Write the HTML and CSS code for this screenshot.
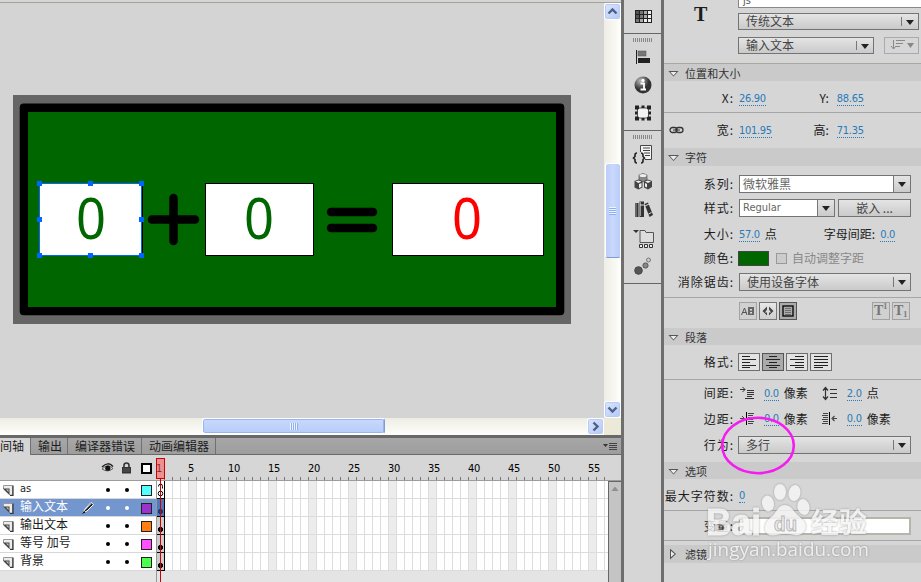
FILE: index.html
```html
<!DOCTYPE html>
<html lang="zh-CN">
<head>
    <meta charset="UTF-8">
    <title>Flash</title>
    <link rel="stylesheet" href="styles.css">
</head>
<body>
<div class="app">
    <div class="main">
        <div class="workspace">
            <svg class="stage" width="604" height="415" viewBox="0 3 604 415">
                <rect x="13" y="95" width="558" height="229" fill="#666"/>
                <rect x="19.7" y="103.5" width="544.6" height="211.8" rx="4" fill="#000"/>
                <rect x="28" y="112" width="528" height="195" fill="#060"/>
                <g fill="#fff" stroke="#000">
                    <rect x="39.5" y="183.5" width="103" height="72"/>
                    <rect x="205.5" y="183.5" width="108" height="72"/>
                    <rect x="392.5" y="183.5" width="151" height="72"/>
                </g>
                <g stroke="#000" stroke-width="8.5" stroke-linecap="round">
                    <path d="M152 219.5h43M173.5 198v43"/>
                    <path d="M331 212h42M331 228h42"/>
                </g>
                <g class="num">
                    <text x="76" y="238.5" fill="#060" textLength="30" lengthAdjust="spacingAndGlyphs">0</text>
                    <text x="244" y="238.5" fill="#060" textLength="30" lengthAdjust="spacingAndGlyphs">0</text>
                    <text x="452" y="238.5" fill="#f00" textLength="30" lengthAdjust="spacingAndGlyphs">0</text>
                </g>
                <rect x="39.5" y="183.5" width="102" height="72" fill="none" stroke="#06f"/>
                <path fill="#06f" d="M37 181h5v5h-5zM88 181h5v5h-5zM139 181h5v5h-5zM37 217h5v5h-5zM139 217h5v5h-5zM37 253h5v5h-5zM88 253h5v5h-5zM139 253h5v5h-5z"/>
            </svg>
            <div class="vscroll">
                <div class="sbtn"><svg width="15" height="15"><path d="M3.5 9.5l4-4 4 4"/></svg></div>
                <div class="vthumb"></div>
                <div class="sbtn"><svg width="15" height="15"><path d="M3.5 5.5l4 4 4-4"/></svg></div>
            </div>
        </div>
        <div class="hscroll">
            <div class="hthumb"></div>
            <div class="sbtn"><svg width="15" height="15"><path d="M5.5 3.5l4 4-4 4"/></svg></div>
            <div class="corner"></div>
        </div>

        <div class="tabs">
            <div class="tab active">间轴</div>
            <div class="tab">输出</div>
            <div class="tab">编译器错误</div>
            <div class="tab">动画编辑器</div>
            <svg class="menu" width="15" height="9"><path d="M0 2h5l-2.500 3z" fill="#333"/><path d="M6 1.500h8M6 3.500h8M6 5.500h8M6 7.500h8" stroke="#444"/></svg>
        </div>

        <div class="timeline">
            <div class="tl-head">
                <div class="tl-icons">
                    <svg width="56" height="16">
                        <path d="M2 7Q8 1 13 6.500" fill="none" stroke="#222" stroke-width="1.500"/>
                        <path d="M2 9Q8 3 13 8.500Q8 13 2 9z" fill="#ddd" stroke="#444" stroke-width=".8"/>
                        <circle cx="7.800" cy="8.200" r="2.600" fill="#111"/>
                        <path d="M24 8V5.500a2.500 2.500 0 0 1 5 0V8" fill="none" stroke="#333" stroke-width="1.600"/>
                        <rect x="22" y="7" width="9" height="6.500" fill="#333"/>
                        <path d="M23 9h7M23 11h7" stroke="#777" stroke-width=".6"/>
                        <rect x="42" y="4" width="9" height="9" fill="#fff" stroke="#000" stroke-width="2"/>
                    </svg>
                </div>
                <div class="ruler">
                    <span class="first">1</span><span>5</span><span>10</span><span>15</span><span>20</span><span>25</span><span>30</span><span>35</span><span>40</span><span>45</span><span>50</span><span>55</span>
                </div>
            </div>
            <div class="tl-body">
                <div class="layers">
                    <div class="layer">
                        <svg class="page" width="12" height="12"><use href="#page"/></svg>
                        <span class="name latin">as</span><i class="dot"></i><i class="dot"></i><b class="swatch cyan"></b>
                    </div>
                    <div class="layer selected">
                        <svg class="page" width="12" height="12"><use href="#page"/></svg>
                        <span class="name">输入文本</span>
                        <svg class="pencil" width="15" height="14"><path d="M2 12l2-4 6-6.500 2.500 2L6 10z" fill="#222" stroke="#fff"/><path d="M4 9l6-6" stroke="#999"/><path d="M1 13l2-3 1.500 1.500z" fill="#000"/></svg>
                        <i class="dot"></i><i class="dot"></i><b class="swatch purple"></b>
                    </div>
                    <div class="layer">
                        <svg class="page" width="12" height="12"><use href="#page"/></svg>
                        <span class="name">输出文本</span><i class="dot"></i><i class="dot"></i><b class="swatch orange"></b>
                    </div>
                    <div class="layer">
                        <svg class="page" width="12" height="12"><use href="#page"/></svg>
                        <span class="name">等号 加号</span><i class="dot"></i><i class="dot"></i><b class="swatch pink"></b>
                    </div>
                    <div class="layer">
                        <svg class="page" width="12" height="12"><use href="#page"/></svg>
                        <span class="name">背景</span><i class="dot"></i><i class="dot"></i><b class="swatch green"></b>
                    </div>
                </div>
                <div class="frames">
                    <div class="track"><div class="key script"><svg width="7" height="17"><path d="M1.500 5.500q0-2.500 2-2.500t2 2.500v2" fill="none" stroke="#000"/><circle cx="3.500" cy="12.500" r="2.300" fill="#fff" stroke="#000"/></svg></div></div>
                    <div class="track"><div class="key on"></div></div>
                    <div class="track"><div class="key"></div></div>
                    <div class="track"><div class="key"></div></div>
                    <div class="track"><div class="key"></div></div>
                </div>
                <div class="tl-scroll"><svg width="12" height="14"><path d="M2.500 9h7L6 4.500z" fill="#909090"/></svg></div>
            </div>
            <div class="playhead"></div>
        </div>
    </div>

    <div class="dock">
        <div class="group one">
            <div class="tool"><svg width="24" height="24"><rect x="4" y="5" width="17" height="13" fill="#222"/><path fill="#555" d="M5 6h3v3H5zM5 10h3v3H5z"/><path fill="#777" d="M9 6h3v3H9zM5 14h3v3H5zM9 10h3v3H9z"/><path fill="#aaa" d="M13 6h3v3h-3zM9 14h3v3H9zM13 10h3v3h-3z"/><path fill="#eee" d="M17 6h3v3h-3zM17 10h3v3h-3zM13 14h3v3h-3zM17 14h3v3h-3z"/></svg></div>
        </div>
        <div class="group">
            <div class="grip"></div>
            <div class="tool"><svg width="24" height="24"><path d="M5.500 5v14" stroke="#222"/><rect x="7" y="6" width="8" height="5" fill="#777" stroke="#555" stroke-width=".5"/><rect x="7" y="13" width="12" height="5" fill="#222"/></svg></div>
            <div class="tool"><svg width="24" height="24"><defs><radialGradient id="ball" cx=".35" cy=".25"><stop offset="0" stop-color="#bbb"/><stop offset="1" stop-color="#333"/></radialGradient></defs><circle cx="12" cy="12" r="8.500" fill="url(#ball)"/><circle cx="12" cy="7.500" r="1.700" fill="#fff"/><path d="M9.500 10.500h3.500V16M9.500 16.500h5.500" stroke="#fff" stroke-width="1.800" fill="none"/></svg></div>
            <div class="tool"><svg width="24" height="24"><rect x="6.500" y="7" width="11" height="10" fill="#eee" stroke="#555"/><path fill="#222" d="M4 4.500h4v4H4zM10.500 4.500h3v2.500h-3zM16 4.500h4v4h-4zM4 10.500h2.500v3H4zM17.500 10.500H20v3h-2.500zM4 15.500h4v4H4zM10.500 17h3v2.500h-3zM16 15.500h4v4h-4z"/><rect x="7.500" y="8" width="9" height="8" fill="#f2f2f2"/></svg></div>
        </div>
        <div class="group">
            <div class="grip"></div>
            <div class="tool"><svg width="24" height="24"><path d="M9.500 10V3.500h11v14H14" fill="#f4f4f4" stroke="#444"/><path d="M12 6h7M12 8.500h7M13 11h6M14 13.500h5" stroke="#444"/><path d="M6 11q-2 0-2 2v1.500L2.500 16 4 17.500V19q0 2 2 2M10 11q2 0 2 2v1.500l1.500 1.500-1.500 1.500V19q0 2-2 2" fill="none" stroke="#222" stroke-width="1.600"/></svg></div>
            <div class="tool"><svg width="24" height="24"><path d="M8 5l4-1.500L16 5v5l-4 2-4-2z" fill="#888" stroke="#555" stroke-width=".7"/><ellipse cx="12" cy="5.500" rx="3.500" ry="1.600" fill="#eee"/><path d="M3.500 11l4-1.500 4 1.500v6.500l-4 2-4-2zM13 11l4-1.500 4 1.500v6l-4 2.500-4-2z" fill="#444"/><path d="M4.500 11.500l3-1 3 1-3 1.500zM14 11.500l3-1 3 1-3 1.500zM8 14l2.500-1v4L8 18zM14 13l2 1v3.500l-2-1z" fill="#eee"/></svg></div>
            <div class="tool"><svg width="24" height="24"><path d="M4 5h3.500v14H4zM8.500 3.500H13V19H8.500z" fill="#333"/><path d="M13.500 6l3.500-1.500 5 12.500-3.500 2z" fill="#333"/><path d="M5 5v14M9.500 4v14" stroke="#999"/><path d="M9 7h4M14 8l4-2M17.500 16l3-1.500" stroke="#ddd"/></svg></div>
            <div class="tool"><svg width="24" height="24"><path d="M2 3h6L5 6z" fill="#333"/><path d="M9 6V3.500h5l1 2h7.500v10H9z" fill="#ddd" stroke="#555"/><path d="M8.500 17.500h3v3h-3zM13.500 17.500h3v3h-3zM18.500 17.500h3v3h-3z" fill="#eee" stroke="#333"/></svg></div>
            <div class="tool"><svg width="24" height="24"><circle cx="7.500" cy="15.500" r="3.800" fill="#555" stroke="#444"/><circle cx="14.500" cy="10.500" r="2.600" fill="#888" stroke="#555"/><circle cx="17.500" cy="5" r="2" fill="#ccc" stroke="#777"/></svg></div>
        </div>
    </div>

    <div class="props">
        <div class="top">
            <div class="big-t">T</div>
            <div class="top-fields">
                <div class="field js">js</div>
                <div class="select w181">传统文本<u></u></div>
                <div class="pair">
                    <div class="select w136">输入文本<u></u></div>
                    <div class="dir"><svg width="28" height="12"><path d="M5.500 1v9M3 7l2.500 3L8 7M8 1.500h9M8 4.500h7M8 7.500h4" fill="none" stroke="#888"/><path d="M19 4h7l-3.500 5z" fill="#888"/></svg></div>
                </div>
            </div>
        </div>

        <div class="head"><i class="tri"></i>位置和大小</div>
        <div class="row xy line"><span class="label">X:</span><a>26.90</a><span class="label2">Y:</span><a>88.65</a></div>
        <div class="row wh">
            <svg class="chain" width="16" height="8"><rect x="1" y="1.500" width="7" height="5" rx="2.500" fill="none" stroke="#333" stroke-width="1.300"/><rect x="7" y="1.500" width="7" height="5" rx="2.500" fill="none" stroke="#333" stroke-width="1.300"/><path d="M4 4h7" stroke="#333"/></svg>
            <span class="label">宽:</span><a>101.95</a><span class="label2">高:</span><a>71.35</a>
        </div>

        <div class="head char"><i class="tri"></i>字符</div>
        <div class="row family"><span class="label">系列:</span><div class="combo w172">微软雅黑<u></u></div></div>
        <div class="row style"><span class="label">样式:</span><div class="combo w97 latin">Regular<u></u></div><div class="button">嵌入 ...</div></div>
        <div class="row size"><span class="label">大小:</span><a>57.0</a><span class="unit">点</span><span class="label3">字母间距:</span><a>0.0</a></div>
        <div class="row color"><span class="label">颜色:</span><div class="fill"></div><div class="check"></div><span class="muted">自动调整字距</span></div>
        <div class="row alias line"><span class="label">消除锯齿:</span><div class="select w172">使用设备字体<u></u></div></div>
        <div class="row marks">
            <div class="mini dim"><svg width="16" height="16"><path d="M1.500 12l3-7 2.500 7M2.500 9.500h4" fill="none" stroke="#555"/><path d="M8 4h6v8H8z" fill="#666"/><path d="M10 6h2v1.500h-2zM10 9h2v1.500h-2z" fill="#ddd"/></svg></div>
            <div class="mini"><svg width="16" height="16"><path d="M7 3.500v9L2.500 8zM9 3.500v9L13.500 8z" fill="#444"/><path d="M7 6.500v3H5zM9 6.500v3h2z" fill="#ddd"/></svg></div>
            <div class="mini pressed"><svg width="16" height="16"><rect x="3" y="3" width="10" height="10" fill="none" stroke="#000" stroke-width="1.300"/><path d="M5 5.500h6M5 7.500h6M5 9.500h6M5 11.500h6" stroke="#444" stroke-width=".6"/></svg></div>
            <div class="mini dim push">T<sup>1</sup></div>
            <div class="mini dim">T<sub>1</sub></div>
        </div>

        <div class="head"><i class="tri"></i>段落</div>
        <div class="row format line"><span class="label">格式:</span>
            <div class="align"><svg width="20" height="16"><path d="M3 2.500h8M3 5.500h14M3 8.500h8M3 11.500h14M3 13.500h8"/></svg></div>
            <div class="align pressed"><svg width="20" height="16"><path d="M6 2.500h8M3 5.500h14M6 8.500h8M3 11.500h14M6 13.500h8"/></svg></div>
            <div class="align"><svg width="20" height="16"><path d="M8 2.500h9M3 5.500h14M8 8.500h9M3 11.500h14M8 13.500h9"/></svg></div>
            <div class="align"><svg width="20" height="16"><path d="M3 2.500h14M3 5.500h14M3 8.500h14M3 11.500h14M3 13.500h9"/></svg></div>
        </div>
        <div class="row spacing"><span class="label">间距:</span>
            <svg class="ic" width="17" height="15"><path d="M1 3.500h5M3.500 1L6 3.500 3.500 6M8 4.500h7M8 6.500h7M8 8.500h7M8 10.500h5M6 12.500h9" fill="none" stroke="#333"/></svg>
            <a>0.0</a><span class="unit">像素</span>
            <svg class="ic2" width="17" height="15"><path d="M3.500 2v11M1 4.500l2.500-3 2.500 3M1 10.500l2.500 3 2.500-3M8 3.500h7M8 7.500h7M8 11.500h7" fill="none" stroke="#333" stroke-width="1.200"/></svg>
            <a>2.0</a><span class="unit">点</span>
        </div>
        <div class="row margin"><span class="label">边距:</span>
            <svg class="ic" width="17" height="15"><path d="M1 7.500h4M3 5l2.500 2.500L3 10M9 2.500h6M9 4.500h5M9 6.500h6M9 8.500h5M9 10.500h6M9 12.500h5" fill="none" stroke="#444"/><path d="M7.500 1v13" stroke="#000"/></svg>
            <a>0.0</a><span class="unit">像素</span>
            <svg class="ic2" width="17" height="15"><path d="M1 2.500h5M0 4.500h6M1 6.500h5M0 8.500h6M1 10.500h5M0 12.500h6M11 7.500h4M12.500 5L10 7.500l2.500 2.500" fill="none" stroke="#444" stroke-width="1.200"/><path d="M7.500 1v13" stroke="#000"/></svg>
            <a>0.0</a><span class="unit">像素</span>
        </div>
        <div class="row behave"><span class="label">行为:</span><div class="select w173">多行<u></u></div></div>

        <div class="head"><i class="tri"></i>选项</div>
        <div class="row max line"><span class="label">最大字符数:</span><a>0</a></div>
        <div class="row var line"><span class="label">变量:</span><div class="input"></div></div>
        <div class="head filters"><i class="tri closed"></i>滤镜</div>
    </div>
</div>

<!-- watermark and hand-drawn ring over the panel -->
<svg class="overlay" width="221" height="182" viewBox="700 400 221 182">
    <g class="wm">
        <text x="706" y="534.500" class="wm-big" textLength="55" lengthAdjust="spacingAndGlyphs">Bai</text>
        <ellipse cx="768" cy="503.500" rx="6" ry="8" transform="rotate(-12 768 503.500)"/>
        <ellipse cx="780" cy="492" rx="6" ry="8"/>
        <ellipse cx="794.500" cy="493" rx="6" ry="8" transform="rotate(10 794.500 493)"/>
        <ellipse cx="803.500" cy="507" rx="6" ry="8" transform="rotate(-14 803.500 507)"/>
        <path d="M785 505q5 0 9 6 3 4 7 7 7 6 4 12-3 6-10 5-10-2-19 0-9 2-11-5-1-7 5-12 4-3 7-8 3-5 8-5z"/>
        <text x="811" y="533" class="wm-cn" textLength="56" lengthAdjust="spacingAndGlyphs">经验</text>
        <text x="708" y="556" class="wm-url" textLength="161" lengthAdjust="spacingAndGlyphs">jingyan.baidu.com</text>
    </g>
    <text x="774" y="531" class="wm-du" textLength="23" lengthAdjust="spacingAndGlyphs">du</text>
    <ellipse cx="758" cy="445.500" rx="35.800" ry="27.700" fill="none" stroke="#f41cf0" stroke-width="2.600"/>
</svg>

<svg width="0" height="0" class="defs"><defs><g id="page"><path d="M1.500 1.500h9v9.500H8L1.500 5z" fill="#ececec" stroke="#999"/><path d="M11 1.500V11.500H8" fill="none" stroke="#333" stroke-width="1.200"/><path d="M1 4.500h6.500V11z" fill="#444"/><path d="M4 5.500h2.500v2.500z" fill="#ccc"/></g></defs></svg>
</body>
</html>
```

FILE: styles.css
```css
* {
    box-sizing: border-box;
}

body {
    margin: 0;
    width: 921px;
    height: 582px;
    overflow: hidden;
    background: #d6d6d6;
    color: #1c1c1c;
    font-family: "Noto Sans CJK SC", sans-serif;
    font-size: 12px;
    line-height: 16px;
}

svg {
    display: block;
    flex: none;
}

.defs {
    position: absolute;
}

.app {
    display: flex;
    height: 582px;
}

.latin, .ruler, a {
    font-family: "DejaVu Sans Condensed", "Noto Sans", sans-serif;
    font-size: 11px;
}

/* ---- left side ---- */
.main {
    width: 624px;
    flex: none;
    border-right: 3px solid #6e6e6e;
    display: flex;
    flex-direction: column;
}

.workspace {
    display: flex;
    height: 416px;
    margin-top: 2px;
    border-top: 1px solid #a5a29a;
    background: #d4d4d4;
}

.num {
    font-family: "Noto Sans", sans-serif;
    font-size: 57px;
}

.vscroll {
    width: 17px;
    background: linear-gradient(90deg, #eeede5, #fefefb);
    display: flex;
    flex-direction: column;
    align-items: center;
}

.sbtn {
    width: 17px;
    height: 17px;
    flex: none;
    border: 1px solid #fff;
    border-radius: 3px;
    background: linear-gradient(135deg, #dbe5fe, #b4c8f6);
    box-shadow: inset 0 0 0 1px #b8cbf6;
}

.sbtn path {
    fill: none;
    stroke: #4d6185;
    stroke-width: 2.4;
}

.vthumb {
    width: 16px;
    height: 95px;
    margin-top: 143px;
    margin-bottom: 143px;
    border: 1px solid #fff;
    border-bottom-color: #7d9cd8;
    border-radius: 3px;
    background:
        repeating-linear-gradient(#eef4fe 0 1px, #8cb0f8 1px 2px) center / 7px 8px no-repeat,
        linear-gradient(90deg, #bccdf8, #cad8fd 50%, #b6cdf8);
}

.hscroll {
    display: flex;
    height: 17px;
    background: linear-gradient(#eeede5, #fefefb);
}

.hthumb {
    width: 183px;
    height: 16px;
    margin-left: 202px;
    margin-right: 202px;
    border: 1px solid #fff;
    border-right-color: #7d9cd8;
    border-radius: 3px;
    box-shadow: inset 0 0 0 1px #9ab5ee;
    background:
        repeating-linear-gradient(90deg, #eef4fe 0 1px, #8cb0f8 1px 2px) center / 8px 7px no-repeat,
        linear-gradient(#cad8fd, #b6cdf8);
}

.corner {
    width: 17px;
    background: #ece9d8;
}

.tabs {
    display: flex;
    height: 20px;
    border-top: 3px solid #686868;
    border-bottom: 1px solid #6a6a6a;
    background: linear-gradient(#a7a7a7, #9d9d9d);
    white-space: nowrap;
}

.tab {
    padding: 0 6px 0 7px;
    width: 37px;
    border-right: 1px solid #707070;
    line-height: 15px;
}

.tab:nth-child(n+3) {
    width: 74px;
}

.tab.active {
    width: 31px;
    height: 17px;
    padding: 0;
    background: #d6d6d6;
}

.menu {
    margin: 4px 3px 0 auto;
}

/* ---- timeline ---- */
.timeline {
    position: relative;
    flex: 1;
    background: #e4e4e4;
}

.tl-head {
    display: flex;
    height: 26px;
    background: #d6d6d6;
    border-bottom: 1px solid #9c9c9c;
}

.tl-icons {
    width: 156px;
    padding: 5px 0 0 100px;
}

.ruler {
    display: flex;
    flex: 1;
    overflow: hidden;
    color: #000;
    line-height: 27px;
    letter-spacing: -.3px;
    background: repeating-linear-gradient(90deg, transparent 0 7px, #777 7px 8px) 1px 100% / 452px 3px no-repeat;
}

.ruler span {
    flex: none;
    width: 40px;
}

.ruler .first {
    width: 32px;
}

.tl-body {
    display: flex;
    height: 101px;
}

.layers {
    width: 157px;
    border-right: 1px solid #999;
}

.layer {
    display: flex;
    align-items: center;
    height: 18px;
    padding-left: 2px;
    background: #fff;
    border-bottom: 1px solid #d8d8d8;
}

.layer.selected {
    background: #7396cf;
    color: #fff;
}

.page {
    margin-top: 1px;
}

.name {
    width: 60px;
    margin-left: 6px;
    margin-right: 26px;
    margin-top: -3px;
    white-space: nowrap;
}

.name.latin {
    margin-top: -2px;
}

.selected .name {
    margin-right: 1px;
}

.pencil {
    margin-right: 10px;
}

.dot {
    width: 4px;
    height: 4px;
    margin-right: 15px;
    margin-top: 1px;
    border-radius: 2px;
    background: #000;
    flex: none;
}

.selected .dot {
    background: #fff;
}

.dot + .dot {
    margin-right: 12px;
}

.swatch {
    width: 11px;
    height: 11px;
    border: 1px solid #222;
    margin-top: 1px;
    flex: none;
}

.cyan { background: #5ff; }
.purple { background: #93c; }
.orange { background: #ff8011; }
.pink { background: #ff4fff; }
.green { background: #4fff4f; }

.frames {
    width: 451px;
}

.track {
    height: 18px;
    border-bottom: 1px solid #dcdcdc;
    background:
        repeating-linear-gradient(90deg, transparent 0 7px, #dcdcdc 7px 8px),
        repeating-linear-gradient(90deg, #fff 0 32px, #ececec 32px 40px);
}

.key {
    width: 8px;
    height: 18px;
    border-right: 1px solid #000;
    border-bottom: 1px solid #000;
    background: radial-gradient(circle at 3.5px 12.5px, #000 2.3px, transparent 2.9px), #ccc;
}

.key.on {
    background: radial-gradient(circle at 3.5px 12.5px, #1b3a6b 2.3px, transparent 2.9px), #4c78bd;
}

.key.script {
    background: #fff;
}

.tl-scroll {
    width: 13px;
    background: #c4c4c4;
    border-left: 1px solid #666;
    border-top: 1px solid #666;
}

/* sits over ruler and tracks */
.playhead {
    position: absolute;
    left: 156px;
    top: 3px;
    width: 9px;
    height: 21px;
    border: 1px solid #c00;
    background: rgba(255, 90, 90, .55);
}

.playhead::after {
    content: "";
    position: absolute;
    left: 3px;
    top: 20px;
    width: 1px;
    height: 110px;
    background: #c00;
}

/* ---- icon dock ---- */
.dock {
    width: 40px;
    flex: none;
    border-right: 3px solid #6e6e6e;
}

.group {
    padding-top: 4px;
    border-bottom: 1px solid #666;
    height: 97px;
}

.group.one {
    height: 34px;
    padding-top: 3px;
}

.group:last-child {
    height: 153px;
}

.grip {
    width: 19px;
    height: 4px;
    margin: 0 0 1px 9px;
    background: repeating-linear-gradient(90deg, #888 0 1px, transparent 1px 2px);
}

.tool {
    height: 28.2px;
    display: flex;
    align-items: center;
    padding-left: 7px;
}

/* ---- properties ---- */
.props {
    flex: 1;
    overflow: hidden;
    white-space: nowrap;
}

.top {
    display: flex;
    height: 64px;
    border-bottom: 1px solid #a8a8a0;
}

.big-t {
    width: 74px;
    flex: none;
    padding: 5px 0 0 30px;
    font: bold 20px/18px "Liberation Serif", serif;
}

.top-fields {
    flex: none;
}

.field.js {
    width: 190px;
    height: 8px;
    overflow: hidden;
    border: 1px solid #888;
    border-top: 0;
    background: #fff;
    padding-left: 4px;
    font: 11px/1px "DejaVu Sans Condensed", sans-serif;
    color: #555;
    margin-bottom: 5px;
}

.pair {
    display: flex;
    gap: 10px;
    margin-top: 7px;
}

.select, .combo, .button {
    height: 17px;
    border: 1px solid #747474;
    color: #444;
    line-height: 14px;
    background: linear-gradient(#e4e4e4, #cacaca);
    display: flex;
    justify-content: space-between;
    padding-left: 7px;
    flex: none;
}

.row .select, .row .combo, .row .button {
    height: 18px;
    line-height: 15px;
}

.combo {
    background: #fff;
    padding-left: 3px;
    color: #666;
}

.select u, .combo u {
    width: 17px;
    position: relative;
    border-left: 1px solid #777;
    margin: 3px 0;
}

.combo u {
    margin: 0;
    background: linear-gradient(#e4e4e4, #cacaca);
}

.select u::after, .combo u::after {
    content: "";
    position: absolute;
    left: 4px;
    top: 50%;
    margin-top: -2px;
    border: 4px solid transparent;
    border-top: 5px solid #222;
    border-bottom: 0;
}

.w181 { width: 181px; }
.w136 { width: 136px; }
.w172 { width: 172px; }
.w173 { width: 173px; margin-left: -1px; }
.w97 { width: 96px; }

.dir {
    width: 35px;
    height: 17px;
    border: 1px solid #aaa;
    padding: 1px 0 0 3px;
}

.button {
    width: 73px;
    margin-left: 3px;
    justify-content: center;
    padding: 0;
}

.head {
    display: flex;
    align-items: center;
    height: 17px;
    padding-left: 4px;
    background: #cacaca;
    font-size: 11px;
    line-height: 14px;
    letter-spacing: .1px;
    color: #333;
}

.head.char {
    height: 18px;
}

.tri {
    width: 11px;
    height: 6px;
    margin-right: 6px;
    margin-top: 2px;
    background: #555;
    clip-path: polygon(0 0, 100% 0, 50% 100%);
    display: flex;
    justify-content: center;
    align-items: flex-start;
}

.tri::after {
    content: "";
    width: 7px;
    height: 4px;
    margin-top: 1px;
    background: #eee;
    clip-path: polygon(0 0, 100% 0, 50% 100%);
}

.tri.closed {
    width: 6px;
    height: 11px;
    margin: 0 9px 0 2px;
    clip-path: polygon(0 0, 100% 50%, 0 100%);
}

.tri.closed::after {
    width: 4px;
    height: 7px;
    margin: 2px 1px 0 0;
    clip-path: polygon(0 0, 100% 50%, 0 100%);
}

.row {
    display: flex;
    align-items: center;
    height: 24px;
}

.line {
    border-bottom: 1px solid #a6a6a6;
}

.label {
    width: 70px;
    margin-right: 5px;
    text-align: right;
    letter-spacing: 1px;
    flex: none;
}

a {
    color: #2a7ab9;
    line-height: 13px;
    letter-spacing: -.3px;
    border-bottom: 1px dotted #2a7ab9;
    margin-top: 1px;
}

.label2 {
    width: 63px;
    text-align: right;
    margin-right: 8px;
}

.unit {
    margin-left: 5px;
}

.xy { height: 32px; padding-top: 3px; }
.wh { height: 35px; padding-bottom: 1px; }
.wh .label { width: 49px; }
.wh .label2 { width: 57px; }

.chain {
    margin-left: 5px;
}

.family { height: 30px; padding-top: 6px; }
.size { height: 27px; padding-top: 1px; }
.color { height: 22px; }
.alias { height: 29px; padding-bottom: 2px; }

.label3 {
    margin-left: 47px;
    margin-right: 5px;
}

.fill {
    width: 31px;
    height: 15px;
    margin-left: -1px;
    background: #060;
    border: 1px solid #444;
}

.check {
    width: 11px;
    height: 11px;
    margin: 0 5px 0 7px;
    border: 1px solid #999;
    background: #ccc;
}

.muted {
    color: #888;
}

.marks {
    height: 30px;
    padding: 0 0 4px 75px;
    gap: 2px;
}

.mini {
    width: 18px;
    height: 18px;
    border: 1px solid #777;
    background: linear-gradient(#e6e6e6, #cfcfcf);
    color: #777;
    font: bold 14px/16px "Liberation Serif", serif;
    padding-left: 1px;
}

.mini svg {
    margin-left: -1px;
}

.mini sup, .mini sub {
    font-size: 8px;
    line-height: 0;
}

.mini sub {
    vertical-align: -2px;
}

.dim {
    border-color: #a2a2a2;
    background: #d0d0d0;
}

.push {
    margin-left: 73px;
}

.mini.pressed, .align.pressed {
    background: #aaa;
    border-color: #555;
}

.format { height: 35px; }
.format .label { margin-right: 4px; }

.align {
    width: 22px;
    height: 18px;
    margin-right: 2px;
    border: 1px solid #6e6e6e;
    background: #e2e2e2;
}

.align path {
    stroke: #222;
}

.spacing { height: 27px; padding-bottom: 1px; }
.margin { padding-bottom: 1px; }
.behave { height: 31px; padding-bottom: 3px; }
.max { height: 32px; padding-top: 2px; }
.var { height: 30px; }

.ic {
    margin-right: 8px;
}

.ic2 {
    margin-left: 14px;
    margin-right: 8px;
}

.input {
    width: 173px;
    height: 18px;
    margin-left: -1px;
    border: 2px solid #b5b5ac;
    background: #fff;
}

.filters {
    margin-top: 4px;
    height: 18px;
}

/* ---- on top of everything ---- */
.overlay {
    position: absolute;
    left: 700px;
    top: 400px;
}

.wm {
    fill: #f6f6f6;
    opacity: .82;
    filter: drop-shadow(0 0 1px rgba(110, 110, 110, .7));
}

.wm-big {
    font: bold 36px "Liberation Sans", sans-serif;
    stroke: #f6f6f6;
    stroke-width: .8;
}

.wm-cn {
    font: bold 28px "Noto Sans CJK SC", sans-serif;
}

.wm-url {
    font: 18px "Open Sans", sans-serif;
}

.wm-du {
    font: bold 20px "Liberation Sans", sans-serif;
    fill: #ececec;
    stroke: #b4b4b4;
    stroke-width: .9;
}
```
